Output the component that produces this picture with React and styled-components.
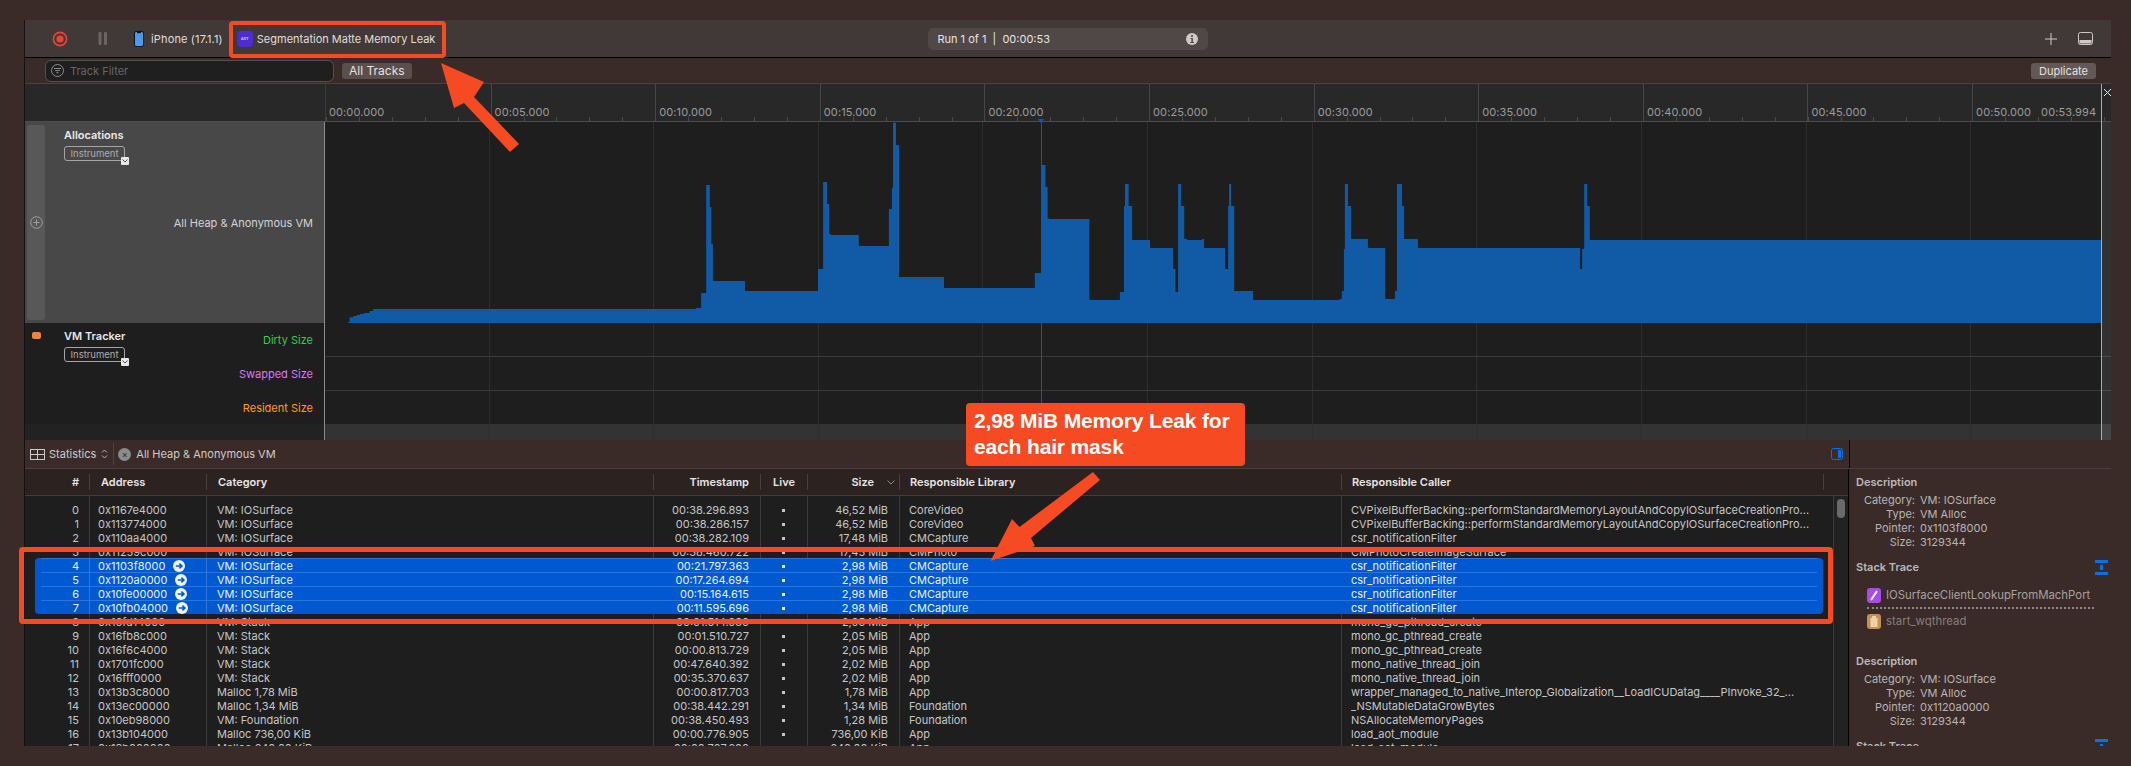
import React from "react";
import styled, { createGlobalStyle } from "styled-components";

const GlobalStyle = createGlobalStyle`
  html, body { margin: 0; padding: 0; background: #3a2b29; }
  body { font-family: Inter, "Liberation Sans", sans-serif; font-size: 11px; color: #c9c9c9; }
  * { box-sizing: border-box; }
`;

const UNIT = 164.62;

// traced from the reference, in crop pixels (x / 1.96, y / 3)
const FIRST_HALF = [[55,640],[55,636],[58,636],[58,622],[65,622],[65,618],[72,618],[72,615],[78,615],[78,612],[86,612],[86,609],[97,609],[97,603],[104,603],[104,597],[737,597],[737,594],[747,594],[747,549],[757,549],[757,225],[764,225],[764,291],[767,291],[767,402],[770,402],[770,513],[833,513],[833,543],[976,543],[976,477],[986,477],[986,216],[994,216],[994,282],[998,282],[998,372],[1001,372],[1001,375],[1056,375],[1056,408],[1115,408],[1115,297],[1121,297],[1121,234],[1123,234],[1123,38],[1129,38],[1129,105],[1135,105],[1135,501],[1223,501],[1223,534],[1401,534],[1401,489],[1414,489],[1414,165],[1422,165],[1422,231],[1426,231],[1426,324],[1430,327],[1508,327],[1508,570]];
const SECOND_HALF = [[0,570],[39,570],[39,546],[47,546],[47,288],[49,288],[49,222],[56,222],[56,288],[63,288],[63,390],[98,390],[98,414],[143,414],[143,477],[148,477],[148,546],[153,546],[153,222],[159,222],[159,288],[165,288],[165,387],[171,387],[171,390],[200,390],[200,387],[204,387],[204,414],[245,414],[245,477],[251,477],[251,288],[253,288],[253,222],[257,222],[257,288],[263,288],[263,543],[300,543],[300,570],[470,570],[470,567],[474,567],[474,543],[478,543],[478,417],[480,417],[480,222],[486,222],[486,288],[492,288],[492,387],[525,387],[525,414],[559,414],[559,567],[578,567],[578,543],[582,543],[582,222],[592,222],[592,288],[596,288],[596,387],[623,387],[623,414],[941,414],[941,477],[945,477],[945,417],[949,417],[949,222],[955,222],[955,288],[960,288],[960,390]];

const graphPoints = [
  ...FIRST_HALF.map(([x, y]) => [320 + x / 1.96 - 325, 110 + y / 3 - 122]),
  ...SECOND_HALF.map(([x, y]) => [1100 + x / 1.96 - 325, 110 + y / 3 - 122]),
  [1776, 118],
  [1776, 201],
  [23, 201],
].map((p) => p.map((n) => n.toFixed(1)).join(",")).join(" ");

const CVP = "CVPixelBufferBacking::performStandardMemoryLayoutAndCopyIOSurfaceCreationPro...";
const CSR = "csr_notificationFilter";
const ROWS = [
  ["0", "0x1167e4000", "VM: IOSurface", "00:38.296.893", "46,52 MiB", "CoreVideo", CVP],
  ["1", "0x113774000", "VM: IOSurface", "00:38.286.157", "46,52 MiB", "CoreVideo", CVP],
  ["2", "0x110aa4000", "VM: IOSurface", "00:38.282.109", "17,48 MiB", "CMCapture", CSR],
  ["3", "0x11259c000", "VM: IOSurface", "00:38.460.722", "17,45 MiB", "CMPhoto", "CMPhotoCreateImageSurface"],
  ["4", "0x1103f8000", "VM: IOSurface", "00:21.797.363", "2,98 MiB", "CMCapture", CSR, true],
  ["5", "0x1120a0000", "VM: IOSurface", "00:17.264.694", "2,98 MiB", "CMCapture", CSR, true],
  ["6", "0x10fe00000", "VM: IOSurface", "00:15.164.615", "2,98 MiB", "CMCapture", CSR, true],
  ["7", "0x10fb04000", "VM: IOSurface", "00:11.595.696", "2,98 MiB", "CMCapture", CSR, true],
  ["8", "0x16fd14000", "VM: Stack", "00:01.514.030", "2,05 MiB", "App", "mono_gc_pthread_create"],
  ["9", "0x16fb8c000", "VM: Stack", "00:01.510.727", "2,05 MiB", "App", "mono_gc_pthread_create"],
  ["10", "0x16f6c4000", "VM: Stack", "00:00.813.729", "2,05 MiB", "App", "mono_gc_pthread_create"],
  ["11", "0x1701fc000", "VM: Stack", "00:47.640.392", "2,02 MiB", "App", "mono_native_thread_join"],
  ["12", "0x16fff0000", "VM: Stack", "00:35.370.637", "2,02 MiB", "App", "mono_native_thread_join"],
  ["13", "0x13b3c8000", "Malloc 1,78 MiB", "00:00.817.703", "1,78 MiB", "App", "wrapper_managed_to_native_Interop_Globalization__LoadICUDatag____PInvoke_32_..."],
  ["14", "0x13ec00000", "Malloc 1,34 MiB", "00:38.442.291", "1,34 MiB", "Foundation", "_NSMutableDataGrowBytes"],
  ["15", "0x10eb98000", "VM: Foundation", "00:38.450.493", "1,28 MiB", "Foundation", "NSAllocateMemoryPages"],
  ["16", "0x13b104000", "Malloc 736,00 KiB", "00:00.776.905", "736,00 KiB", "App", "load_aot_module"],
  ["17", "0x13b000000", "Malloc 640,00 KiB", "00:00.767.200", "640,00 KiB", "App", "load_aot_module"],
];

const MARKS = ["00:00.000", "00:05.000", "00:10.000", "00:15.000", "00:20.000", "00:25.000", "00:30.000", "00:35.000", "00:40.000", "00:45.000"];

const Page = styled.div`
  position: relative;
  width: 2131px;
  height: 766px;
  padding: 20px 20px 20px 24px;
  overflow: hidden;
  background: #3a2b29;
`;
const Window = styled.div`
  display: flex;
  flex-direction: column;
  height: 726px;
  border-left: 1px solid #151110;
`;

const Toolbar = styled.div`
  display: flex;
  align-items: center;
  height: 38px;
  flex: none;
  background: #413937;
  border-bottom: 1px solid #000;
  position: relative;
`;
const ToolIcon = styled.svg`
  display: block;
  flex: none;
  margin-left: ${(p) => p.$left}px;
`;
const ToolText = styled.span`
  margin-left: ${(p) => p.$left}px;
  color: #e0dedd;
  letter-spacing: ${(p) => p.$track || 0}px;
  white-space: nowrap;
`;
const AppIcon = styled.div`
  width: 16px;
  height: 16px;
  flex: none;
  margin-left: 4px;
  border-radius: 4px;
  background: #4f2bd6;
  color: #c9c2f2;
  font-size: 4px;
  font-weight: 700;
  display: flex;
  align-items: center;
  justify-content: center;
`;
const RunPill = styled.div`
  display: flex;
  align-items: center;
  justify-content: space-between;
  width: 280px;
  height: 22px;
  margin-left: 493px;
  padding: 0 10px 0 9px;
  border-radius: 5px;
  background: #504846;
  color: #e6e4e3;
  white-space: pre;
`;
const ToolbarEnd = styled.div`
  display: flex;
  align-items: center;
  gap: 21px;
  margin-left: auto;
  padding-right: 18px;
`;

const FilterBar = styled.div`
  display: flex;
  align-items: center;
  height: 26px;
  flex: none;
  padding: 0 15px 0 20px;
  border-bottom: 1px solid #4d4140;
`;
const FilterInput = styled.div`
  display: flex;
  align-items: center;
  gap: 6px;
  width: 289px;
  height: 22px;
  padding-left: 5px;
  border: 1px solid #565050;
  border-radius: 6px;
  background: #1f1f1f;
  color: #666;
`;
const BarButton = styled.div`
  height: 16px;
  line-height: 16px;
  padding: 0 ${(p) => p.$pad}px;
  margin-left: ${(p) => p.$left || 0};
  border-radius: 3px;
  background: ${(p) => p.$bg};
  color: #e4e2e1;
  font-size: ${(p) => p.$size}px;
  white-space: nowrap;
`;

const Timeline = styled.div`
  position: relative;
  flex: none;
`;
const RulerRow = styled.div`
  display: grid;
  grid-template-columns: 300px 1fr;
  height: 38px;
  background: #282828;
  border-bottom: 1px solid #4c4c4c;
`;
const RulerScale = styled.div`
  display: flex;
  min-width: 0;
  border-left: 1px solid #3a3a3a;
  background: repeating-linear-gradient(90deg, #4c4c4c 0 1px, transparent 1px ${UNIT / 5}px) bottom left / 100% 4px no-repeat;
`;
const RulerMark = styled.div`
  width: ${(p) => p.$width || UNIT}px;
  flex: none;
  padding: 21px 0 0 3px;
  border-left: 1px solid #474747;
  color: #9c9c9c;
  line-height: 14px;
  letter-spacing: 0.1px;
  white-space: nowrap;
  &:first-child { border-left: none; }
`;
const RulerEnd = styled.span`
  padding-top: 21px;
  color: #9c9c9c;
  line-height: 14px;
  letter-spacing: 0.1px;
  white-space: nowrap;
`;
const TrackRow = styled.div`
  display: grid;
  grid-template-columns: 300px 1fr;
  height: ${(p) => p.$height}px;
  border-bottom: ${(p) => (p.$line ? "1px solid #3d3d3d" : "none")};
`;
const TrackLabel = styled.div`
  display: flex;
  background: ${(p) => p.$bg};
  border-right: 1px solid #8c8c8c;
`;
const Gutter = styled.div`
  width: 18px;
  flex: none;
  margin: 3px 2px 3px 2px;
  border-radius: 3px;
  background: ${(p) => p.$bg || "transparent"};
  display: flex;
  justify-content: center;
  align-items: ${(p) => (p.$top ? "flex-start" : "center")};
  padding-top: ${(p) => (p.$top ? "6px" : 0)};
`;
const OrangeDot = styled.div`
  width: 9px;
  height: 7px;
  border-radius: 2px;
  background: #f5823c;
`;
const TrackHead = styled.div`
  padding: 6px 0 0 17px;
  width: 100px;
`;
const TrackTitle = styled.div`
  font-weight: 600;
  line-height: 14px;
  color: #e8e8e8;
  white-space: nowrap;
`;
const InstrumentBadge = styled.div`
  position: relative;
  width: 61px;
  height: 15px;
  margin-top: 4px;
  border: 1px solid #a5a5a5;
  border-radius: 3px;
  font-size: 9.5px;
  line-height: 13px;
  text-align: center;
  color: #adadad;
`;
const BadgeChevron = styled.span`
  position: absolute;
  right: -5px;
  bottom: -5px;
  width: 8px;
  height: 8px;
  border-radius: 1px;
  background: #e8e8e8;
  display: flex;
  align-items: center;
  justify-content: center;
`;
const TrackValues = styled.div`
  margin-left: auto;
  display: flex;
  flex-direction: column;
  justify-content: center;
  text-align: right;
  padding-right: 11px;
`;
const TrackValue = styled.div`
  height: 34px;
  line-height: 34px;
  color: ${(p) => p.$color};
  white-space: nowrap;
`;
const GraphArea = styled.div`
  background:
    repeating-linear-gradient(90deg, transparent 0 ${UNIT - 1}px, #2e2e2e ${UNIT - 1}px ${UNIT}px),
    ${(p) => p.$bg || "#1e1e1e"};
`;
const GraphSvg = styled.svg`
  display: block;
  width: 100%;
  height: 100%;
`;
const GraphLane = styled.div`
  height: 34px;
  border-bottom: 1px solid #3a3a3a;
`;
const Playhead = styled.div`
  position: absolute;
  left: 1016px;
  top: 35px;
  bottom: 16px;
  width: 1px;
  background: #0b57c7;
  &::before {
    content: "";
    position: absolute;
    left: -3px;
    top: 0;
    border-left: 3.5px solid transparent;
    border-right: 3.5px solid transparent;
    border-top: 4px solid #0b57c7;
  }
`;
const EndLine = styled.div`
  position: absolute;
  left: 2076px;
  top: 0;
  bottom: 0;
  width: 1px;
  background: #ababab;
`;
const EndStrip = styled.div`
  position: absolute;
  left: 2077px;
  right: 0;
  top: 38px;
  bottom: 0;
  background: rgba(255, 255, 255, 0.09);
`;
const EndCross = styled.svg`
  position: absolute;
  left: 2078px;
  top: 4px;
`;

const StatsBar = styled.div`
  display: flex;
  align-items: center;
  height: 29px;
  flex: none;
  border-bottom: 1px solid #4a3f3d;
  padding-left: 5px;
  color: #cfcbca;
`;
const StatsLabel = styled.span`
  margin-left: 4px;
`;
const StatsSort = styled.svg`
  margin-left: 5px;
`;
const StatsDivider = styled.div`
  width: 1px;
  height: 22px;
  margin: 0 4px 0 5px;
  background: #4d4341;
`;
const CloseDot = styled.div`
  width: 13px;
  height: 13px;
  margin-right: 5px;
  border-radius: 50%;
  background: #8b8b8b;
  color: #2a2a2a;
  font-size: 9px;
  line-height: 13px;
  text-align: center;
`;
const SidebarToggle = styled.svg`
  margin-left: auto;
  margin-right: 6px;
`;
const StatsBarEnd = styled.div`
  width: 262px;
  height: 100%;
  flex: none;
  border-left: 1px solid #000;
`;

const Lower = styled.div`
  display: flex;
  flex: 1;
  min-height: 0;
  position: relative;
`;
const StatsArea = styled.div`
  width: 1824px;
  flex: none;
  display: flex;
  flex-direction: column;
  min-height: 0;
  border-right: 1px solid #000;
`;
const HeaderRow = styled.div`
  display: grid;
  grid-template-columns: 64px 117px 447px 107px 47px 92px 442px 482px 1fr;
  align-items: center;
  height: 27px;
  flex: none;
  background: #2c2220;
  border-bottom: 1px solid #453b39;
  font-weight: 600;
  color: #e6e6e6;
`;
const HeaderCell = styled.div`
  display: flex;
  align-items: center;
  justify-content: ${(p) => p.$justify || "flex-start"};
  height: 16px;
  padding: ${(p) => p.$pad || "0 0 0 11px"};
  border-left: ${(p) => (p.$first ? "none" : "1px solid #4a403e")};
  white-space: nowrap;
`;
const Body = styled.div`
  display: flex;
  flex: 1;
  min-height: 0;
  overflow: hidden;
  background: #1e1e1e;
`;
const RowList = styled.div`
  flex: 1;
  padding-top: 7px;
  background:
    linear-gradient(#3a3a3a, #3a3a3a) 64px 0 / 1px 100% no-repeat,
    linear-gradient(#3a3a3a, #3a3a3a) 181px 0 / 1px 100% no-repeat,
    linear-gradient(#3a3a3a, #3a3a3a) 628px 0 / 1px 100% no-repeat,
    linear-gradient(#3a3a3a, #3a3a3a) 735px 0 / 1px 100% no-repeat,
    linear-gradient(#3a3a3a, #3a3a3a) 782px 0 / 1px 100% no-repeat,
    linear-gradient(#3a3a3a, #3a3a3a) 874px 0 / 1px 100% no-repeat,
    linear-gradient(#3a3a3a, #3a3a3a) 1316px 0 / 1px 100% no-repeat;
`;
const Row = styled.div`
  position: relative;
  display: grid;
  grid-template-columns: 64px 117px 447px 107px 47px 92px 442px 1fr;
  height: 14px;
  line-height: 14px;
  color: ${(p) => (p.$selected ? "#eaf1fb" : "#c6c6c6")};
  white-space: nowrap;
  &::before {
    content: "";
    display: ${(p) => (p.$selected ? "block" : "none")};
    position: absolute;
    left: 10px;
    right: 10px;
    top: -1px;
    bottom: 1px;
    background:
      linear-gradient(#2a74da, #2a74da) 6px 0 / calc(100% - 12px) 1px no-repeat,
      linear-gradient(90deg, transparent 54px, #2f76d8 54px, #2f76d8 55px, transparent 55px, transparent 171px, #2f76d8 171px, #2f76d8 172px, transparent 172px),
      #0059d1;
    border-radius: ${(p) => (p.$first ? "4px 4px 0 0" : p.$last ? "0 0 4px 4px" : "0")};
  }
`;
const Cell = styled.div`
  position: relative;
  display: flex;
  align-items: center;
  gap: ${(p) => p.$gap || 0}px;
  justify-content: ${(p) => p.$justify || "flex-start"};
  padding: ${(p) => p.$pad || "0"};
  overflow: hidden;
`;
const LiveDot = styled.span`
  width: 3px;
  height: 3px;
  background: currentColor;
`;
const ScrollTrack = styled.div`
  position: relative;
  width: 15px;
  flex: none;
  border-left: 1px solid #3a3a3a;
  background: #222;
`;
const ScrollThumb = styled.div`
  width: 8px;
  height: 19px;
  margin: 3px 0 0 3px;
  border-radius: 4px;
  background: #6a6a6a;
`;

const SidePanel = styled.div`
  flex: 1;
  min-width: 0;
  overflow: hidden;
  padding: 6px 3px 0 7px;
  color: #b9b5b4;
`;
const SideHeading = styled.div`
  display: flex;
  align-items: center;
  justify-content: space-between;
  height: 14px;
  margin-top: ${(p) => p.$top || 0}px;
  font-weight: 600;
  color: #bdb9b8;
  white-space: nowrap;
`;
const KeyValues = styled.div`
  display: grid;
  grid-template-columns: 59px 1fr;
  column-gap: 5px;
  margin-top: 4px;
  line-height: 14px;
`;
const KeyName = styled.div`
  text-align: right;
  white-space: nowrap;
`;
const Frame = styled.div`
  display: flex;
  align-items: center;
  gap: 5px;
  height: 16px;
  margin-top: ${(p) => p.$top}px;
  padding-left: 11px;
  font-size: 11.4px;
  color: ${(p) => p.$color};
  white-space: nowrap;
`;
const FrameBadge = styled.div`
  width: 14px;
  height: 15px;
  flex: none;
  border-radius: 3px;
  background: ${(p) => p.$bg};
  display: flex;
  align-items: center;
  justify-content: center;
`;
const Dotted = styled.div`
  height: 0;
  margin: 4px 14px 0 11px;
  border-top: 2px dotted #8c8886;
`;

const RedBox = styled.div`
  position: absolute;
  left: ${(p) => p.$x}px;
  top: ${(p) => p.$y}px;
  width: ${(p) => p.$w}px;
  height: ${(p) => p.$h}px;
  border: ${(p) => p.$stroke}px solid #f64a23;
  border-radius: 4px;
  pointer-events: none;
`;
const Callout = styled.div`
  position: absolute;
  left: 966px;
  top: 403px;
  width: 279px;
  height: 63px;
  padding: 5px 8px;
  border-radius: 4px;
  background: #f64a23;
  color: #fff;
  font-family: "Liberation Sans", Arial, sans-serif;
  font-size: 21px;
  font-weight: 700;
  line-height: 26px;
  letter-spacing: -0.15px;
  white-space: nowrap;
`;
const ArrowLayer = styled.svg`
  position: absolute;
  left: 0;
  top: 0;
  pointer-events: none;
`;

const GoArrow = () => (
  <svg width="12" height="12" viewBox="0 0 12 12">
    <circle cx="6" cy="6" r="6" fill="#eef4fc" />
    <path d="M2.8 6H8.6M6.4 3.6L8.9 6L6.4 8.4" fill="none" stroke="#0059d1" strokeWidth="1.6" />
  </svg>
);

const StackIcon = () => (
  <svg width="13" height="15" viewBox="0 0 13 15">
    <rect x="0" y="0" width="13" height="3" fill="#0a6fe8" />
    <rect x="0" y="12" width="13" height="3" fill="#0a6fe8" />
    <rect x="5" y="5" width="3" height="5" fill="#0a6fe8" />
  </svg>
);

const Badge = () => (
  <InstrumentBadge>
    Instrument
    <BadgeChevron>
      <svg width="6" height="4" viewBox="0 0 6 4">
        <path d="M0.5 0.5L3 3L5.5 0.5" fill="none" stroke="#555" strokeWidth="1" />
      </svg>
    </BadgeChevron>
  </InstrumentBadge>
);

const Description = ({ pointer, top }) => (
  <>
    <SideHeading $top={top}>Description</SideHeading>
    <KeyValues>
      <KeyName>Category:</KeyName><div>VM: IOSurface</div>
      <KeyName>Type:</KeyName><div>VM Alloc</div>
      <KeyName>Pointer:</KeyName><div>{pointer}</div>
      <KeyName>Size:</KeyName><div>3129344</div>
    </KeyValues>
  </>
);

export default function App() {
  return (
    <Page>
      <GlobalStyle />
      <Window>
        <Toolbar>
          <ToolIcon $left={27} width="16" height="16" viewBox="0 0 16 16">
            <circle cx="8" cy="8" r="6.6" fill="none" stroke="#ef4136" strokeWidth="1.6" />
            <circle cx="8" cy="8" r="3.6" fill="#ef4136" />
          </ToolIcon>
          <ToolIcon $left={30} width="10" height="13" viewBox="0 0 10 13">
            <rect x="0.5" y="0" width="3" height="13" rx="1" fill="#6c6462" />
            <rect x="6" y="0" width="3" height="13" rx="1" fill="#6c6462" />
          </ToolIcon>
          <ToolIcon $left={26} width="10" height="16" viewBox="0 0 10 16">
            <rect x="0.5" y="0.5" width="9" height="15" rx="1.6" fill="#4a9bea" stroke="#111" />
            <rect x="3" y="1" width="4" height="1.2" fill="#111" />
          </ToolIcon>
          <ToolText $left={7} $track={0.15}>iPhone (17.1.1)</ToolText>
          <ToolIcon $left={7} width="3" height="5" viewBox="0 0 3 5">
            <path d="M0 0L3 2.5L0 5Z" fill="#a8a3a1" />
          </ToolIcon>
          <AppIcon>AIIT</AppIcon>
          <ToolText $left={4}>Segmentation Matte Memory Leak</ToolText>
          <RunPill>
            <span>Run 1 of 1  |  00:00:53</span>
            <svg width="12" height="12" viewBox="0 0 12 12">
              <circle cx="6" cy="6" r="6" fill="#cfcac8" />
              <circle cx="6" cy="3" r="1.1" fill="#504846" />
              <path d="M4.6 5H6.9V9H8V10H4.2V9H5.4V6H4.6Z" fill="#504846" />
            </svg>
          </RunPill>
          <ToolbarEnd>
            <svg width="12" height="12" viewBox="0 0 12 12">
              <path d="M6 0V12M0 6H12" stroke="#cfcac8" strokeWidth="1" />
            </svg>
            <svg width="15" height="13" viewBox="0 0 15 13">
              <rect x="0.5" y="0.5" width="14" height="12" rx="2" fill="none" stroke="#cfcac8" />
              <rect x="1.5" y="8" width="12" height="3.5" fill="#cfcac8" />
            </svg>
          </ToolbarEnd>
        </Toolbar>

        <FilterBar>
          <FilterInput>
            <svg width="13" height="13" viewBox="0 0 13 13">
              <circle cx="6.5" cy="6.5" r="6" fill="none" stroke="#8e8e8e" />
              <path d="M3 4.5H10M4.2 6.6H8.8M5.4 8.7H7.6" stroke="#8e8e8e" strokeWidth="1" />
            </svg>
            Track Filter
          </FilterInput>
          <BarButton $bg="#5a4f4d" $pad={7} $size={12} $left="8px">All Tracks</BarButton>
          <BarButton $bg="#625856" $pad={8} $size={11} $left="auto">Duplicate</BarButton>
        </FilterBar>

        <Timeline>
          <RulerRow>
            <div />
            <RulerScale>
              {MARKS.map((m) => <RulerMark key={m}>{m}</RulerMark>)}
              <RulerMark $width={69}>00:50.000</RulerMark>
              <RulerEnd>00:53.994</RulerEnd>
            </RulerScale>
          </RulerRow>

          <TrackRow $height={201} $line>
            <TrackLabel $bg="#484848">
              <Gutter $bg="#585858">
                <svg width="13" height="13" viewBox="0 0 13 13">
                  <circle cx="6.5" cy="6.5" r="5.8" fill="none" stroke="#a0a0a0" />
                  <path d="M6.5 3.5V9.5M3.5 6.5H9.5" stroke="#a0a0a0" strokeWidth="1" />
                </svg>
              </Gutter>
              <TrackHead>
                <TrackTitle>Allocations</TrackTitle>
                <Badge />
              </TrackHead>
              <TrackValues>
                <TrackValue $color="#d4d4d4">All Heap &amp; Anonymous VM</TrackValue>
              </TrackValues>
            </TrackLabel>
            <GraphArea>
              <GraphSvg viewBox="0 0 1786 201" preserveAspectRatio="none">
                <polygon points={graphPoints} fill="#115ba6" />
              </GraphSvg>
            </GraphArea>
          </TrackRow>

          <TrackRow $height={101} $line>
            <TrackLabel $bg="#1e1e1e">
              <Gutter $top><OrangeDot /></Gutter>
              <TrackHead>
                <TrackTitle>VM Tracker</TrackTitle>
                <Badge />
              </TrackHead>
              <TrackValues>
                <TrackValue $color="#2fd04a">Dirty Size</TrackValue>
                <TrackValue $color="#d87af0">Swapped Size</TrackValue>
                <TrackValue $color="#ff9f0a">Resident Size</TrackValue>
              </TrackValues>
            </TrackLabel>
            <GraphArea>
              <GraphLane />
              <GraphLane />
            </GraphArea>
          </TrackRow>

          <TrackRow $height={16}>
            <TrackLabel $bg="#222222" />
            <GraphArea $bg="#333333" />
          </TrackRow>

          <Playhead />
          <EndStrip />
          <EndLine />
          <EndCross width="9" height="9" viewBox="0 0 9 9">
            <path d="M1 1L8 8M8 1L1 8" stroke="#e8e8e8" strokeWidth="1" />
          </EndCross>
        </Timeline>

        <StatsBar>
          <svg width="15" height="11" viewBox="0 0 15 11">
            <rect x="0.5" y="0.5" width="14" height="10" fill="none" stroke="#cfcbca" />
            <path d="M7.5 0V11M0 5.5H15" stroke="#cfcbca" />
          </svg>
          <StatsLabel>Statistics</StatsLabel>
          <StatsSort width="7" height="10" viewBox="0 0 7 10">
            <path d="M1 3.5L3.5 1L6 3.5M1 6.5L3.5 9L6 6.5" fill="none" stroke="#b8b4b3" />
          </StatsSort>
          <StatsDivider />
          <CloseDot>×</CloseDot>
          <span>All Heap &amp; Anonymous VM</span>
          <SidebarToggle width="12" height="12" viewBox="0 0 12 12">
            <rect x="0.5" y="0.5" width="11" height="11" rx="2" fill="none" stroke="#0a6fe8" />
            <rect x="7" y="2" width="3" height="8" fill="#0a6fe8" />
          </SidebarToggle>
          <StatsBarEnd />
        </StatsBar>

        <Lower>
          <StatsArea>
            <HeaderRow>
              <HeaderCell $first $justify="flex-end" $pad="0 10px 0 0">#</HeaderCell>
              <HeaderCell>Address</HeaderCell>
              <HeaderCell>Category</HeaderCell>
              <HeaderCell $justify="flex-end" $pad="0 11px 0 0">Timestamp</HeaderCell>
              <HeaderCell $justify="center" $pad="0">Live</HeaderCell>
              <HeaderCell $justify="flex-end" $pad="0 4px 0 0">
                Size
                <svg width="8" height="5" viewBox="0 0 8 5" style={{ marginLeft: 13 }}>
                  <path d="M0.5 0.5L4 4L7.5 0.5" fill="none" stroke="#8a8a8a" />
                </svg>
              </HeaderCell>
              <HeaderCell $pad="0 0 0 10px">Responsible Library</HeaderCell>
              <HeaderCell $pad="0 0 0 10px">Responsible Caller</HeaderCell>
              <HeaderCell />
            </HeaderRow>
            <Body>
              <RowList>
                {ROWS.map(([n, addr, cat, ts, size, lib, caller, selected]) => (
                  <Row key={n} $selected={selected} $first={n === "4"} $last={n === "7"}>
                    <Cell $justify="flex-end" $pad="0 10px 0 0">{n}</Cell>
                    <Cell $pad="0 0 0 9px" $gap={8}>
                      {addr}
                      {selected && <GoArrow />}
                    </Cell>
                    <Cell $pad="0 0 0 11px">{cat}</Cell>
                    <Cell $justify="flex-end" $pad="0 11px 0 0">{ts}</Cell>
                    <Cell $justify="center"><LiveDot /></Cell>
                    <Cell $justify="flex-end" $pad="0 11px 0 0">{size}</Cell>
                    <Cell $pad="0 0 0 10px">{lib}</Cell>
                    <Cell $pad="0 0 0 10px">{caller}</Cell>
                  </Row>
                ))}
              </RowList>
              <ScrollTrack><ScrollThumb /></ScrollTrack>
            </Body>
          </StatsArea>
          <SidePanel>
            <Description pointer="0x1103f8000" />
            <SideHeading $top={11}>Stack Trace <StackIcon /></SideHeading>
            <Frame $top={13} $color="#a6a2a0">
              <FrameBadge $bg="#a94be8">
                <svg width="8" height="11" viewBox="0 0 8 11">
                  <path d="M1 10L7 1" stroke="#fff" strokeWidth="2" />
                </svg>
              </FrameBadge>
              IOSurfaceClientLookupFromMachPort
            </Frame>
            <Dotted />
            <Frame $top={4} $color="#857f7d">
              <FrameBadge $bg="#c79052">
                <svg width="8" height="11" viewBox="0 0 8 11">
                  <rect x="0.5" y="2" width="7" height="9" fill="#e9d3ad" />
                  <rect x="2" y="0" width="4" height="2" fill="#e9d3ad" />
                </svg>
              </FrameBadge>
              start_wqthread
            </Frame>
            <Description pointer="0x1120a0000" top={25} />
            <SideHeading $top={11}>Stack Trace <StackIcon /></SideHeading>
          </SidePanel>
        </Lower>
      </Window>

      <RedBox $x={229} $y={21} $w={217} $h={37} $stroke={4} />
      <RedBox $x={19} $y={547} $w={1814} $h={77} $stroke={5} />
      <Callout>
        2,98 MiB Memory Leak for
        <br />
        each hair mask
      </Callout>
      <ArrowLayer width="2131" height="766" viewBox="0 0 2131 766">
        <polygon points="441,63 484,82 474,97 519,144 510,152 464,103 454,108" fill="#f64a23" />
        <polygon points="990.5,561 1012,519 1019.5,527 1093,472 1100,480 1031,538 1035,546" fill="#f64a23" />
      </ArrowLayer>
    </Page>
  );
}
